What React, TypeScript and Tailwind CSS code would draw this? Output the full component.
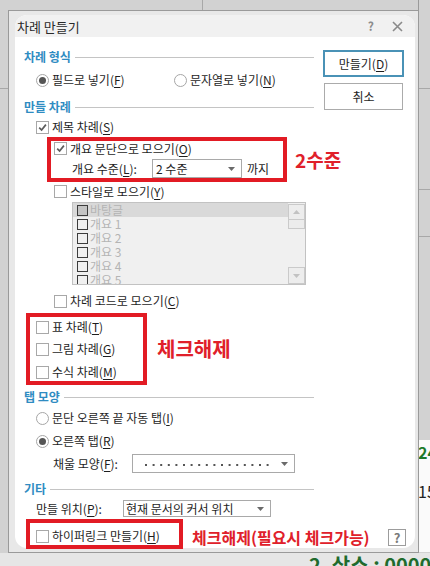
import React from "react";

const Check = ({ checked = false }: { checked?: boolean }) => (
  <span className="w-[13px] h-[13px] border border-[#a8a8a8] bg-white flex items-center justify-center shrink-0">
    {checked && (
      <svg width="9" height="9" viewBox="0 0 9 9">
        <path d="M1.2 4.6 L3.6 7 L7.9 1.6" stroke="#5c5c5c" strokeWidth="1.7" fill="none" />
      </svg>
    )}
  </span>
);

const Radio = ({ checked = false }: { checked?: boolean }) => (
  <span className="w-[13px] h-[13px] rounded-full border border-[#a6a6a6] bg-white flex items-center justify-center shrink-0">
    {checked && <span className="w-[7px] h-[7px] rounded-full bg-[#555555]" />}
  </span>
);

const Arrow = () => (
  <svg width="7" height="4" viewBox="0 0 7 4" className="ml-auto shrink-0">
    <path d="M0 0 L7 0 L3.5 4 Z" fill="#6a6a6a" />
  </svg>
);

const U = ({ children }: { children: React.ReactNode }) => (
  <span className="underline underline-offset-2 decoration-1">{children}</span>
);

const Heading = ({ children, className }: { children: React.ReactNode; className: string }) => (
  <div className={`flex items-center h-[18px] ${className}`}>
    <span className="text-[12px] font-bold text-[#2f8cc2] leading-none">{children}</span>
    <div className="flex-1 h-px bg-[#c4c4c4] ml-[4px]" />
  </div>
);

const ListRow = ({ label, active = false }: { label: string; active?: boolean }) => (
  <div className={`h-[14px] shrink-0 flex items-center pl-[4px] gap-[2px] overflow-hidden ${active ? "bg-[#d9d9d9]" : ""}`}>
    <span className={`w-[11px] h-[11px] border border-[#3c3c3c] shrink-0 ${active ? "bg-[#c4c4c4]" : ""}`} />
    <span className="text-[12px] text-[#b4b4b4] leading-[12px]">{label}</span>
  </div>
);

export default function App() {
  return (
    <div className="relative w-[430px] h-[566px] overflow-hidden bg-[#d2d2d2] font-['Noto_Sans_CJK_KR','Noto_Sans',sans-serif] text-[12px] text-[#1e1e1e]">
      {/* backdrop spreadsheet */}
      <div className="absolute left-0 top-[88px] w-[8px] h-px bg-[#a8a8a8]" />
      <div className="absolute left-[419px] top-[88px] w-[11px] h-px bg-[#a8a8a8]" />
      <div className="absolute left-[419px] top-[189px] w-[11px] h-px bg-[#a8a8a8]" />
      <div className="absolute left-[419px] top-[236px] w-[11px] h-px bg-[#a8a8a8]" />
      <div className="absolute left-[202px] top-0 w-px h-[10px] bg-[#a8a8a8]" />
      <div className="absolute left-[418px] top-0 w-px h-[10px] bg-[#9a9a9a]" />
      <div className="absolute left-[419px] top-[440px] w-[11px] h-[112px] bg-[#fafafa]" />
      <div className="absolute left-[418px] top-[444px] text-[16px] font-bold text-[#1f7a2a] leading-none">24</div>
      <div className="absolute left-[418px] top-[483px] text-[16px] text-[#222] leading-none">15</div>
      <div className="absolute left-0 top-[553px] w-[430px] h-[13px] bg-[#e6e6e6]" />
      <div className="absolute left-[309px] top-[555px] text-[20px] font-bold text-[#1f6b2d] leading-none whitespace-nowrap">
        2. 상소 : 0000
      </div>

      <div className="relative pt-[10px] pl-[8px]">
        <div className="w-[411px] h-[543px] border border-[#9a9a9a] bg-[#e8e8e8] pl-[6px] pt-[4px]">
          <div className="w-[400px] h-[533px] bg-white rounded-[12px] overflow-hidden flex flex-col">
            {/* title bar */}
            <div className="h-[22px] shrink-0 bg-[#f1f1f1] flex items-center pl-[2px] pr-[12px]">
              <span className="text-[13px] text-[#2a2a2a] leading-none">차례 만들기</span>
              <span className="ml-auto text-[12px] font-bold text-[#8c8c8c] leading-none">?</span>
              <svg width="11" height="11" viewBox="0 0 11 11" className="ml-[18px]">
                <path d="M1 1 L10 10 M10 1 L1 10" stroke="#8a8a8a" strokeWidth="1.6" />
              </svg>
            </div>

            {/* body */}
            <div className="flex">
              <div className="w-[299px] pl-[9px] shrink-0 flex flex-col">
                <Heading className="mt-[11px]">차례 형식</Heading>

                <div className="flex items-center h-[18px] mt-[5px] pl-[12px]">
                  <div className="flex items-center gap-[3px] w-[138px]">
                    <Radio checked />
                    <span className="leading-none">필드로 넣기(<U>F</U>)</span>
                  </div>
                  <div className="flex items-center gap-[3px]">
                    <Radio />
                    <span className="leading-none">문자열로 넣기(<U>N</U>)</span>
                  </div>
                </div>

                <Heading className="mt-[9px]">만들 차례</Heading>

                <div className="flex items-center gap-[3px] h-[18px] mt-[2px] pl-[12px]">
                  <Check checked />
                  <span className="leading-none">제목 차례(<U>S</U>)</span>
                </div>

                <div className="flex items-center gap-[3px] h-[17px] mt-[4px] pl-[30px]">
                  <Check checked />
                  <span className="leading-none">개요 문단으로 모으기(<U>O</U>)</span>
                </div>

                <div className="flex items-center h-[19px] mt-[2px] pl-[48px]">
                  <span className="w-[80px] shrink-0 leading-none">개요 수준(<U>L</U>):</span>
                  <div className="w-[90px] h-[19px] border border-[#a9a9a9] bg-white flex items-center pl-[3px] pr-[6px]">
                    <span className="leading-none">2 수준</span>
                    <Arrow />
                  </div>
                  <span className="ml-[5px] leading-none">까지</span>
                </div>

                <div className="flex items-center gap-[3px] h-[17px] mt-[5px] pl-[30px]">
                  <Check />
                  <span className="leading-none">스타일로 모으기(<U>Y</U>)</span>
                </div>

                <div className="ml-[48px] mt-[2px] w-[234px] h-[83px] border border-[#c2c2c2] bg-[#f0f0f0] flex">
                  <div className="flex-1 flex flex-col overflow-hidden">
                    <ListRow label="바탕글" active />
                    <ListRow label="개요 1" />
                    <ListRow label="개요 2" />
                    <ListRow label="개요 3" />
                    <ListRow label="개요 4" />
                    <ListRow label="개요 5" />
                  </div>
                  <div className="w-[17px] shrink-0 flex flex-col pt-px">
                    <div className="h-[16px] border border-[#cacaca] bg-[#ededed] flex items-center justify-center">
                      <svg width="7" height="4" viewBox="0 0 7 4">
                        <path d="M0 4 L7 4 L3.5 0 Z" fill="#c2c2c2" />
                      </svg>
                    </div>
                    <div className="h-[9px] border border-t-0 border-[#cacaca] bg-[#ececec]" />
                    <div className="flex-1" />
                    <div className="h-[17px] border border-[#cacaca] bg-[#ededed] flex items-center justify-center">
                      <svg width="7" height="4" viewBox="0 0 7 4">
                        <path d="M0 0 L7 0 L3.5 4 Z" fill="#c2c2c2" />
                      </svg>
                    </div>
                  </div>
                </div>

                <div className="flex items-center gap-[3px] h-[18px] mt-[7px] pl-[30px]">
                  <Check />
                  <span className="leading-none">차례 코드로 모으기(<U>C</U>)</span>
                </div>

                <div className="flex items-center gap-[3px] h-[18px] mt-[8px] pl-[12px]">
                  <Check />
                  <span className="leading-none">표 차례(<U>T</U>)</span>
                </div>
                <div className="flex items-center gap-[3px] h-[18px] mt-[4px] pl-[12px]">
                  <Check />
                  <span className="leading-none">그림 차례(<U>G</U>)</span>
                </div>
                <div className="flex items-center gap-[3px] h-[18px] mt-[5px] pl-[12px]">
                  <Check />
                  <span className="leading-none">수식 차례(<U>M</U>)</span>
                </div>

                <Heading className="mt-[7px]">탭 모양</Heading>

                <div className="flex items-center gap-[3px] h-[18px] mt-[3px] pl-[12px]">
                  <Radio />
                  <span className="leading-none">문단 오른쪽 끝 자동 탭(<U>I</U>)</span>
                </div>
                <div className="flex items-center gap-[3px] h-[18px] mt-[5px] pl-[12px]">
                  <Radio checked />
                  <span className="leading-none">오른쪽 탭(<U>R</U>)</span>
                </div>

                <div className="flex items-center h-[19px] mt-[4px] pl-[29px]">
                  <span className="w-[79px] shrink-0 leading-none">채울 모양(<U>F</U>):</span>
                  <div className="w-[163px] h-[19px] border border-[#a9a9a9] bg-white flex items-center pl-[12px] pr-[6px]">
                    <svg width="128" height="4" viewBox="0 0 128 4" className="mt-[2px]">
                      <line x1="0" y1="2" x2="128" y2="2" stroke="#555" strokeWidth="2" strokeDasharray="2 5.6" />
                    </svg>
                    <Arrow />
                  </div>
                </div>

                <Heading className="mt-[7px]">기타</Heading>

                <div className="flex items-center h-[17px] mt-[2px] pl-[12px]">
                  <span className="w-[87px] shrink-0 leading-none">만들 위치(<U>P</U>):</span>
                  <div className="w-[148px] h-[17px] border border-[#a9a9a9] bg-white flex items-center pl-[2px] pr-[6px]">
                    <span className="leading-none whitespace-nowrap">현재 문서의 커서 위치</span>
                    <Arrow />
                  </div>
                </div>

                <div className="flex items-center gap-[3px] h-[18px] mt-[10px] pl-[12px]">
                  <Check />
                  <span className="leading-none">하이퍼링크 만들기(<U>H</U>)</span>
                </div>
              </div>

              <div className="ml-[9px] w-[81px] shrink-0 flex flex-col">
                <button className="mt-[13px] h-[27px] w-[81px] border-2 border-[#4a92b6] bg-white flex items-center justify-center text-[12px] leading-none text-[#1e1e1e]">
                  만들기(<U>D</U>)
                </button>
                <button className="mt-[6px] ml-px h-[27px] w-[79px] border border-[#ababab] bg-white flex items-center justify-center text-[12px] leading-none text-[#1e1e1e]">
                  취소
                </button>
              </div>
            </div>
          </div>
        </div>
      </div>

      {/* annotations overlay */}
      <div className="absolute left-[47px] top-[137px] w-[240px] h-[45px] border-[4px] border-[#e21b24]" />
      <div className="absolute left-[26px] top-[313px] w-[121px] h-[72px] border-[4px] border-[#e21b24]" />
      <div className="absolute left-[26px] top-[519px] w-[157px] h-[30px] border-[4px] border-[#e21b24]" />

      <div className="absolute left-[295px] top-[149px] h-[20px] flex items-center text-[19px] font-bold text-[#e0202a] leading-none">
        2수준
      </div>
      <div className="absolute left-[157px] top-[339px] h-[20px] flex items-center text-[20px] font-bold text-[#e0202a] leading-none">
        체크해제
      </div>
      <div className="absolute left-[192px] top-[527px] h-[20px] flex items-center text-[16px] font-bold text-[#e0202a] leading-none whitespace-nowrap">
        체크해제(필요시 체크가능)
      </div>
      <div className="absolute left-[388px] top-[529px] w-[18px] h-[17px] border border-[#9c9c9c] bg-white flex items-center justify-center text-[13px] font-bold text-[#7a7a7a] leading-none">
        ?
      </div>
    </div>
  );
}
